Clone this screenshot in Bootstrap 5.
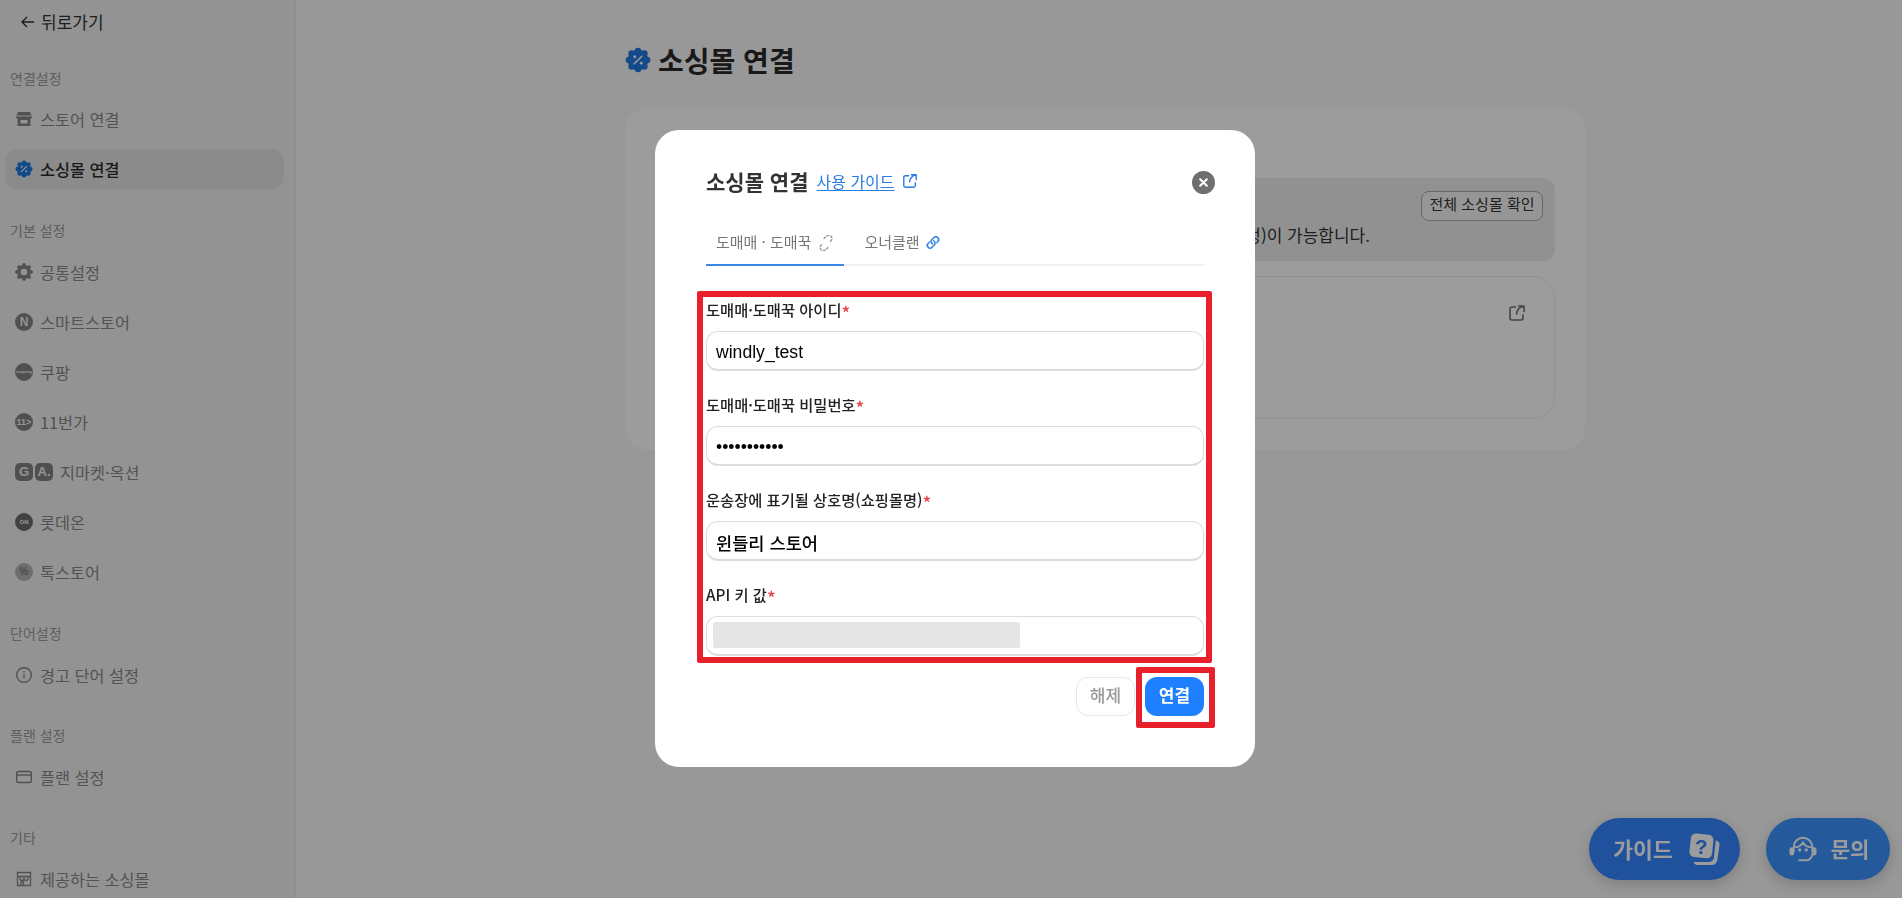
<!DOCTYPE html>
<html lang="ko">
<head>
  <meta charset="UTF-8">
  <meta name="viewport" content="width=device-width, initial-scale=1.0">
  <title>소싱몰 연결</title>
  <link rel="stylesheet" href="https://cdn.jsdelivr.net/npm/bootstrap@5.3.0/dist/css/bootstrap.min.css">
  <style>
    html, body { height: 100%; overflow: hidden; }
    body { font-family: "Noto Sans CJK KR", sans-serif; background: #f8f8f8; color: #222; }
    .page-wrap { height: 898px; overflow: hidden; }

    /* sidebar */
    .side-bar { width: 296px; flex: none; height: 898px; overflow: hidden; background: #f0f0f0; border-right: 1px solid #e6e6e6; padding: 0 11px 0 5px; }
    .back-link { height: 44px; padding-left: 16px; gap: 7px; font-size: 17px; color: #333; }
    .side-head { height: 20px; line-height: 20px; margin: 0 0 12px 5px; font-size: 14px; color: #9a9a9a; }
    .side-group { margin-bottom: 30px; }
    .first-group { margin-top: 24px; margin-bottom: 31px; }
    .first-group .side-head { margin-bottom: 11px; }
    .wide-group { margin-bottom: 31px; }
    .side-item { height: 40px; margin-bottom: 10px; padding-left: 10px; gap: 7px; font-size: 16.3px; color: #888; border-radius: 12px; }
    .side-item.is-active { background: #e4e4e4; color: #2b2b2b; font-weight: 500; }
    .side-ico { width: 18px; height: 18px; flex: none; color: #868686; }
    .logo-dot { width: 18px; height: 18px; flex: none; border-radius: 50%; background: #838383; color: #f0f0f0; font: 700 12px/18px "Liberation Sans", sans-serif; text-align: center; overflow: hidden; }
    .logo-dot.is-num { font-size: 9px; }
    .logo-dot.is-square { border-radius: 5px; font-size: 13px; }
    .logo-dot.is-tiny { font-size: 4px; }
    .logo-dot.is-dark { background: #6b6b6b; font-size: 6px; }
    .logo-dot.is-light { background: #b4b4b4; color: #7a7a7a; font-size: 10px; }
    .logo-pair { gap: 2px; }

    /* main */
    .main-col { padding-left: 329px; }
    .page-title { height: 34px; margin: 43px 0 31px; gap: 7px; font-size: 28px; font-weight: 700; line-height: 34px; color: #2a2a2a; }
    .main-panel { width: 960px; height: 342px; padding: 70px 30px 31px; background: #fff; border-radius: 22px; }
    .info-box { height: 83px; padding: 13px 12px 0; background: #eee; border-radius: 12px; }
    .all-btn { height: 30px; width: 122px; padding: 0 0 4px; font-size: 15px; font-weight: 400; color: #333; border: 1px solid #aaa; border-radius: 8px; background: #f6f6f6; }
    .info-text { margin-top: 2px; padding-right: 173px; font-size: 17px; line-height: 24px; color: #333; white-space: nowrap; }
    .link-card { height: 143px; margin-top: 15px; padding: 27px 28px 0 0; border: 1px solid #efefef; border-radius: 22px; }

    /* floating buttons */
    .float-row { position: fixed; right: 12px; bottom: 18px; gap: 26px; }
    .float-btn { height: 62px; border-radius: 31px; color: #fff; font-weight: 600; box-shadow: 0 4px 14px rgba(0,0,0,.18); }
    .float-guide { width: 151px; padding-left: 5px; background: #3385ff; font-size: 21.5px; gap: 15px; }
    .float-ask { width: 124px; padding-left: 2px; background: #3b92ff; font-size: 21px; gap: 14px; }

    /* modal */
    .modal-backdrop { --bs-backdrop-opacity: .39; --bs-backdrop-bg: #000; }
    .sourcing-dialog { max-width: 600px; width: 600px; margin: 130px 0 0 655px; }
    .sourcing-modal { height: 637px; padding: 36px 51px 0; border: 0; border-radius: 24px; }
    .modal-head { height: 30px; gap: 8px; }
    .modal-name { font-size: 21px; font-weight: 700; line-height: 30px; color: #333; margin: 0; }
    .guide-link { font-size: 16px; color: #2a7de1; gap: 7px; }
    .guide-link u { text-underline-offset: 2px; }
    .close-dot { width: 23px; height: 23px; margin: 2px -11px 0 auto; padding: 0; border: 0; border-radius: 50%; background: #6f6f6f; }
    .tab-bar { margin-top: 26px; height: 44px; gap: 10px; border-bottom: 2px solid #f0f0f0; }
    .tab-bar .nav-link { height: 44px; padding: 0 10px 1px; gap: 7px; font-size: 15px; color: #777; border-bottom: 2px solid transparent; margin-bottom: -2px; }
    .tab-bar .nav-link.active { border-bottom-color: #3b87e8; }
    .tab-bar .tab-linked { gap: 4px; }
    .field-area { position: relative; margin-top: 33px; height: 358px; }
    .red-frame { position: absolute; border: 6px solid #e8202c; border-radius: 2px; pointer-events: none; }
    .frame-form { left: -9px; right: -8px; top: -8px; bottom: -6px; }
    .field-row { height: 95px; }
    .field-label { display: flex; align-items: center; height: 20px; line-height: 20px; margin-bottom: 12px; font-size: 15.3px; font-weight: 500; color: #222; }
    .field-label i { font-style: normal; color: #e8404a; font-size: 18px; line-height: 20px; margin-top: 6px; }
    .field-input { height: 40px; padding: 3px 9px 0; font: 17.6px "Liberation Sans", "Noto Sans CJK KR", sans-serif; color: #000; border: 1px solid #dcdcdc; border-bottom-width: 2px; border-radius: 12px; }
    .field-input.is-name { font-weight: 500; }
    .mask-wrap { position: relative; }
    .key-mask { position: absolute; left: 7px; top: 6px; width: 307px; height: 26px; background: #e5e5e5; border-radius: 2px; }
    .foot-row { position: relative; margin-top: 20px; height: 39px; gap: 10px; }
    .foot-btn { width: 59px; height: 39px; padding: 0 0 4px; font-size: 17px; font-weight: 500; border-radius: 12px; }
    .foot-off { color: #999; background: #fff; border: 1px solid #e8e8e8; }
    .foot-on { color: #fff; background: #1e80ff; border: 0; font-weight: 700; }
    .foot-on:hover, .foot-off:hover { color: inherit; }
    .frame-btn { left: 430px; right: -11px; top: -10px; bottom: -12px; }
  </style>
</head>
<body>
  <svg width="0" height="0" class="position-absolute">
    <symbol id="badgeIco" viewBox="0 0 24 24">
      <g fill="#1f7ae0">
        <circle cx="12" cy="12" r="9.5"/>
        <circle cx="12" cy="3.6" r="3"/><circle cx="17.9" cy="6.1" r="3"/><circle cx="20.4" cy="12" r="3"/><circle cx="17.9" cy="17.9" r="3"/>
        <circle cx="12" cy="20.4" r="3"/><circle cx="6.1" cy="17.9" r="3"/><circle cx="3.6" cy="12" r="3"/><circle cx="6.1" cy="6.1" r="3"/>
      </g>
      <path d="M15.5 8.5l-7 7" stroke="#fff" stroke-width="1.4" stroke-linecap="round"/>
      <circle cx="9" cy="9" r="1.3" fill="#fff"/><circle cx="15" cy="15" r="1.3" fill="#fff"/>
    </symbol>
    <symbol id="outIco" viewBox="0 0 18 18">
      <path d="M7.5 3H4a2 2 0 0 0-2 2v9a2 2 0 0 0 2 2h9a2 2 0 0 0 2-2v-3M10.5 2H16v5.5M16 2c-4.500 1-7 4-7.500 8" fill="none" stroke="currentColor" stroke-width="1.6" stroke-linecap="round" stroke-linejoin="round"/>
    </symbol>
  </svg>

  <div class="page-wrap d-flex">
    <aside class="side-bar">
      <div class="back-link d-flex align-items-center">
        <svg width="13" height="12" viewBox="0 0 13 12"><path d="M6 1L1 6l5 5M1 6h12" fill="none" stroke="#333" stroke-width="1.4"/></svg>
        <span>뒤로가기</span>
      </div>

      <div class="side-group first-group">
        <div class="side-head">연결설정</div>
        <div class="side-item d-flex align-items-center">
          <svg class="side-ico" viewBox="0 0 18 18"><path fill="currentColor" d="M3 2h12l2 5a2 2 0 0 1-1.500 1.800V16H2.500V8.800A2 2 0 0 1 1 7zM5.500 10v3.500h7V10z"/><path d="M1.500 6h15" stroke="#f0f0f0"/></svg>
          <span>스토어 연결</span>
        </div>
        <div class="side-item is-active d-flex align-items-center">
          <svg class="side-ico" viewBox="0 0 24 24"><use href="#badgeIco"/></svg>
          <span>소싱몰 연결</span>
        </div>
      </div>

      <div class="side-group wide-group">
        <div class="side-head">기본 설정</div>
        <div class="side-item d-flex align-items-center">
          <svg class="side-ico" viewBox="0 0 16 16"><path fill="currentColor" d="M9.405 1.050c-.413-1.400-2.397-1.400-2.810 0l-.100.340a1.464 1.464 0 0 1-2.105.872l-.310-.170c-1.283-.698-2.686.705-1.987 1.987l.169.311c.446.820.023 1.841-.872 2.105l-.340.100c-1.400.413-1.400 2.397 0 2.810l.340.100a1.464 1.464 0 0 1 .872 2.105l-.170.310c-.698 1.283.705 2.686 1.987 1.987l.311-.169a1.464 1.464 0 0 1 2.105.872l.100.340c.413 1.400 2.397 1.400 2.810 0l.100-.340a1.464 1.464 0 0 1 2.105-.872l.310.170c1.283.698 2.686-.705 1.987-1.987l-.169-.311a1.464 1.464 0 0 1 .872-2.105l.340-.100c1.400-.413 1.400-2.397 0-2.810l-.340-.100a1.464 1.464 0 0 1-.872-2.105l.170-.310c.698-1.283-.705-2.686-1.987-1.987l-.311.169a1.464 1.464 0 0 1-2.105-.872l-.100-.340zM8 10.930a2.929 2.929 0 1 1 0-5.860 2.929 2.929 0 0 1 0 5.858z"/></svg>
          <span>공통설정</span>
        </div>
        <div class="side-item d-flex align-items-center"><span class="logo-dot">N</span><span>스마트스토어</span></div>
        <div class="side-item d-flex align-items-center"><span class="logo-dot is-tiny">coupang</span><span>쿠팡</span></div>
        <div class="side-item d-flex align-items-center"><span class="logo-dot is-num">11&gt;</span><span>11번가</span></div>
        <div class="side-item d-flex align-items-center">
          <span class="logo-pair d-flex"><span class="logo-dot is-square">G</span><span class="logo-dot is-square">A.</span></span>
          <span>지마켓·옥션</span>
        </div>
        <div class="side-item d-flex align-items-center"><span class="logo-dot is-dark">ON</span><span>롯데온</span></div>
        <div class="side-item d-flex align-items-center"><span class="logo-dot is-light">%</span><span>톡스토어</span></div>
      </div>

      <div class="side-group">
        <div class="side-head">단어설정</div>
        <div class="side-item d-flex align-items-center">
          <svg class="side-ico" viewBox="0 0 18 18"><circle cx="9" cy="9" r="7.300" fill="none" stroke="currentColor" stroke-width="1.400"/><path d="M9 8.200v4.300" stroke="currentColor" stroke-width="1.400"/><circle cx="9" cy="5.800" r=".9" fill="currentColor"/></svg>
          <span>경고 단어 설정</span>
        </div>
      </div>

      <div class="side-group">
        <div class="side-head">플랜 설정</div>
        <div class="side-item d-flex align-items-center">
          <svg class="side-ico" viewBox="0 0 18 18"><rect x="1.700" y="3.500" width="14.600" height="11" rx="1.800" fill="none" stroke="currentColor" stroke-width="1.400"/><path d="M1.700 7h14.600" stroke="currentColor" stroke-width="1.400"/></svg>
          <span>플랜 설정</span>
        </div>
      </div>

      <div class="side-group">
        <div class="side-head">기타</div>
        <div class="side-item d-flex align-items-center">
          <svg class="side-ico" viewBox="0 0 18 18"><path d="M2.500 2.500h13v13h-13zM2.500 6.500h13M5 6.500v2a1.500 1.500 0 0 0 4 0v-2 2a1.500 1.500 0 0 0 4 0v-2M6 15.500v-3.500h2.500v3.500" fill="none" stroke="currentColor" stroke-width="1.300"/></svg>
          <span>제공하는 소싱몰</span>
        </div>
      </div>
    </aside>

    <main class="flex-grow-1 main-col">
      <h1 class="page-title d-flex align-items-center">
        <svg width="26" height="26" viewBox="0 0 24 24"><use href="#badgeIco"/></svg>
        <span>소싱몰 연결</span>
      </h1>
      <section class="main-panel">
        <div class="info-box">
          <div class="d-flex justify-content-end"><button type="button" class="btn all-btn">전체 소싱몰 확인</button></div>
          <div class="info-text text-end">수정)이 가능합니다.</div>
        </div>
        <div class="link-card d-flex justify-content-end">
          <svg width="18" height="18" class="text-secondary"><use href="#outIco"/></svg>
        </div>
      </section>
    </main>
  </div>

  <div class="float-row d-flex">
    <div class="float-btn float-guide d-flex align-items-center justify-content-center">
      <span>가이드</span>
      <svg width="33" height="33" viewBox="0 0 32 32">
        <path d="M27 7c3 1 4 3 3.500 5l-2 14c-.4 3-2.500 5-5 5H10c-2.500 0-4-1-4.500-3H21c2 0 3.500-1.500 4-3.500z" fill="#fff"/>
        <rect x="2" y="1" width="22" height="23" rx="5" fill="#fff" transform="rotate(6 13 13)"/>
        <text x="13" y="20" text-anchor="middle" font-family="Liberation Sans, sans-serif" font-size="20" font-weight="700" fill="#3385ff">?</text>
      </svg>
    </div>
    <div class="float-btn float-ask d-flex align-items-center justify-content-center">
      <svg width="28" height="28" viewBox="0 0 30 30" fill="none" stroke="#fff" stroke-width="2" stroke-linecap="round">
        <path d="M5 18v-5a10 10 0 0 1 20 0v5M7 13c3 0 6-1.500 8-5 2 3.500 5 5 8 5M11 27h8c3 0 5-2 6-6"/>
        <rect x="1.500" y="14" width="3" height="7" rx="1.500" fill="#fff"/><rect x="25.500" y="14" width="3" height="7" rx="1.500" fill="#fff"/>
        <circle cx="11.500" cy="16" r=".8" fill="#fff"/><circle cx="18.500" cy="16" r=".8" fill="#fff"/>
      </svg>
      <span>문의</span>
    </div>
  </div>

  <div class="modal-backdrop fade show"></div>
  <div class="modal fade show d-block" tabindex="-1">
    <div class="modal-dialog sourcing-dialog">
      <div class="modal-content sourcing-modal">
        <div class="modal-head d-flex align-items-center">
          <h2 class="modal-name">소싱몰 연결</h2>
          <a class="guide-link d-flex align-items-center text-decoration-none" href="#">
            <u>사용 가이드</u>
            <svg width="16" height="16" viewBox="0 0 18 18"><use href="#outIco"/></svg>
          </a>
          <button type="button" class="close-dot d-flex align-items-center justify-content-center" aria-label="닫기">
            <svg width="9" height="9" viewBox="0 0 9 9"><path d="M1.200 1.200l6.600 6.600M7.800 1.200L1.200 7.800" stroke="#fff" stroke-width="2" stroke-linecap="round"/></svg>
          </button>
        </div>

        <ul class="nav tab-bar">
          <li class="nav-item">
            <a class="nav-link active d-flex align-items-center" href="#">
              <span>도매매 · 도매꾹</span>
              <svg width="16" height="16" viewBox="0 0 16 16" fill="none" stroke="#999" stroke-width="1.400" stroke-linecap="round" stroke-dasharray="2 2"><path d="M6 3.500l2-2a3.500 3.500 0 0 1 6 3l-2.500 3M10 12.500l-2 2a3.500 3.500 0 0 1-6-3l2.500-3"/></svg>
            </a>
          </li>
          <li class="nav-item">
            <a class="nav-link tab-linked d-flex align-items-center" href="#">
              <span>오너클랜</span>
              <svg width="18" height="18" viewBox="0 0 16 16" fill="#2a7de1" stroke="#2a7de1" stroke-width=".4">
                <path d="M4.715 6.542 3.343 7.914a3 3 0 1 0 4.243 4.243l1.828-1.829A3 3 0 0 0 8.586 5.500L8 6.086a1.002 1.002 0 0 0-.154.199 2 2 0 0 1 .861 3.337L6.880 11.450a2 2 0 1 1-2.830-2.830l.793-.792a4.018 4.018 0 0 1-.128-1.287z"/>
                <path d="M6.586 4.672A3 3 0 0 0 7.414 9.500l.775-.776a2 2 0 0 1-.896-3.346L9.120 3.550a2 2 0 1 1 2.830 2.830l-.793.792c.112.420.155.855.128 1.287l1.372-1.372a3 3 0 1 0-4.243-4.243L6.586 4.672z"/>
              </svg>
            </a>
          </li>
        </ul>

        <form class="field-area">
          <div class="field-row">
            <label class="field-label" for="sellerId">도매매·도매꾹 아이디<i>*</i></label>
            <input class="form-control field-input" id="sellerId" type="text" value="windly_test">
          </div>
          <div class="field-row">
            <label class="field-label" for="sellerPw">도매매·도매꾹 비밀번호<i>*</i></label>
            <input class="form-control field-input" id="sellerPw" type="password" value="windlytest1">
          </div>
          <div class="field-row">
            <label class="field-label" for="shopName">운송장에 표기될 상호명(쇼핑몰명)<i>*</i></label>
            <input class="form-control field-input is-name" id="shopName" type="text" value="윈들리 스토어">
          </div>
          <div class="field-row">
            <label class="field-label" for="apiKey">API 키 값<i>*</i></label>
            <div class="mask-wrap">
              <input class="form-control field-input" id="apiKey" type="text">
              <div class="key-mask"></div>
            </div>
          </div>
          <div class="red-frame frame-form"></div>
        </form>

        <div class="foot-row d-flex justify-content-end">
          <button type="button" class="btn foot-btn foot-off">해제</button>
          <button type="button" class="btn foot-btn foot-on">연결</button>
          <div class="red-frame frame-btn"></div>
        </div>
      </div>
    </div>
  </div>

  <script src="https://cdn.jsdelivr.net/npm/bootstrap@5.3.0/dist/js/bootstrap.bundle.min.js"></script>
</body>
</html>
